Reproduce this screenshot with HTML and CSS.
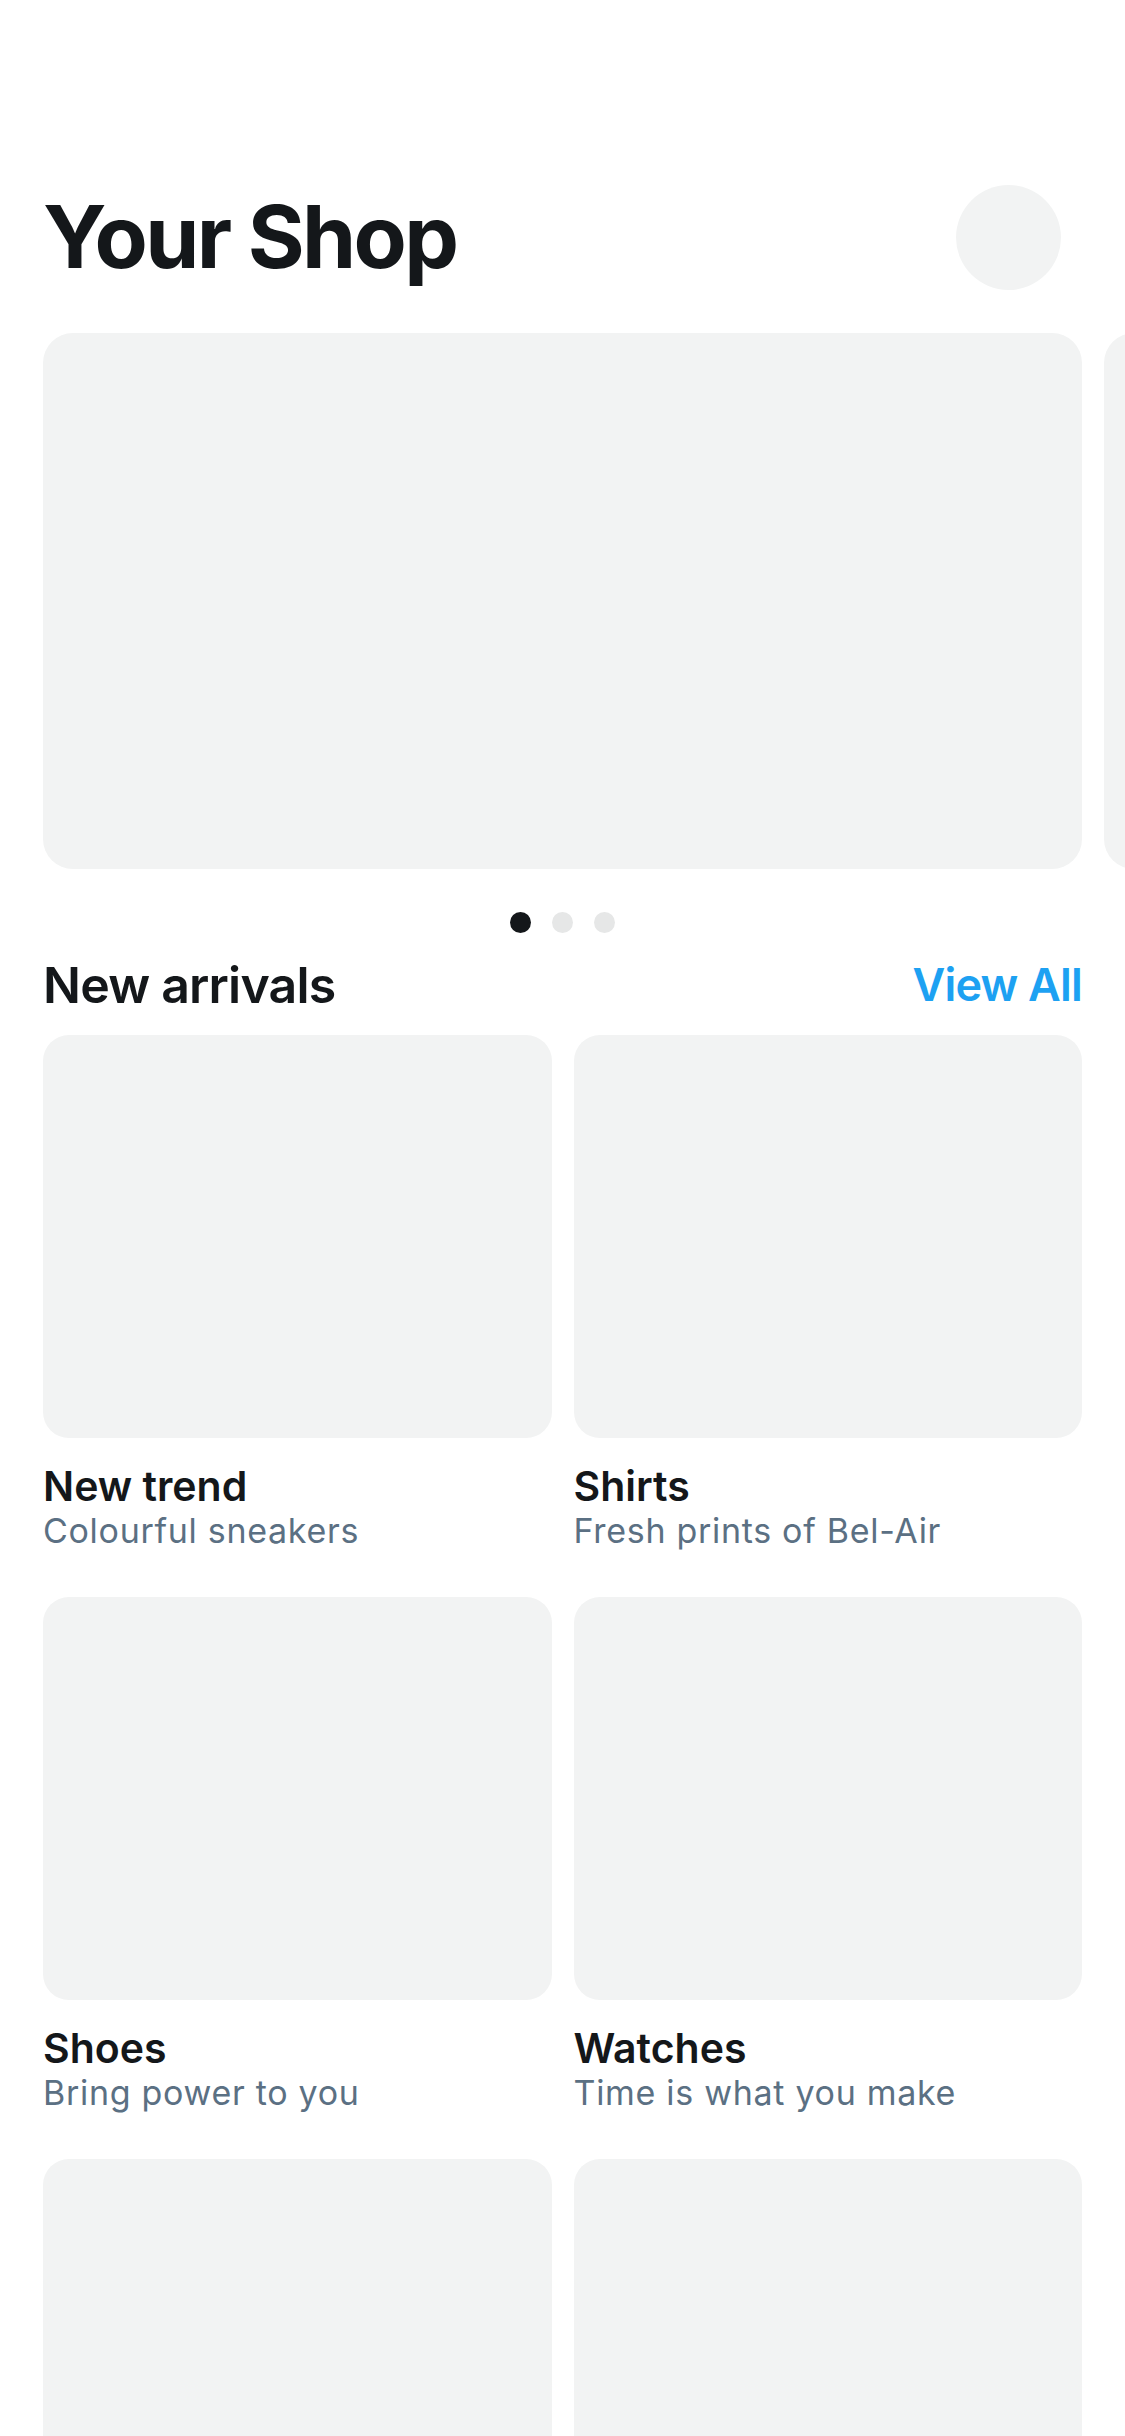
FILE: index.html
```html
<!DOCTYPE html>
<html lang="en">
<head>
<meta charset="utf-8">
<title>Your Shop</title>
<link rel="stylesheet" href="styles.css">
</head>
<body>
<main class="page">
  <header class="header">
    <h1 class="title">Your Shop</h1>
    <div class="avatar"></div>
  </header>

  <section class="carousel">
    <div class="banner-track">
      <div class="banner"></div>
      <div class="banner"></div>
    </div>
    <div class="dots">
      <span class="dot active"></span>
      <span class="dot"></span>
      <span class="dot"></span>
    </div>
  </section>

  <section class="arrivals">
    <div class="section-head">
      <h2 class="section-title">New arrivals</h2>
      <a class="view-all">View All</a>
    </div>
    <div class="grid">
      <div class="card">
        <div class="thumb"></div>
        <div class="card-title">New trend</div>
        <div class="card-sub">Colourful sneakers</div>
      </div>
      <div class="card">
        <div class="thumb"></div>
        <div class="card-title">Shirts</div>
        <div class="card-sub">Fresh prints of Bel-Air</div>
      </div>
      <div class="card">
        <div class="thumb"></div>
        <div class="card-title">Shoes</div>
        <div class="card-sub">Bring power to you</div>
      </div>
      <div class="card">
        <div class="thumb"></div>
        <div class="card-title">Watches</div>
        <div class="card-sub">Time is what you make</div>
      </div>
      <div class="card">
        <div class="thumb"></div>
      </div>
      <div class="card">
        <div class="thumb"></div>
      </div>
    </div>
  </section>
</main>
</body>
</html>
```

FILE: styles.css
```css
* { box-sizing: border-box; }

html, body {
  margin: 0;
  padding: 0;
  background: #ffffff;
}

body {
  font-family: Inter, "Noto Sans", "Liberation Sans", sans-serif;
  color: #14171A;
  width: 1125px;
  height: 2436px;
  overflow: hidden;
}

.page {
  padding: 184px 43px 0 43px;
}

.header {
  display: flex;
  align-items: center;
  justify-content: space-between;
  height: 106px;
}

.title {
  margin: 0;
  font-size: 87px;
  line-height: 106px;
  font-weight: 700;
  letter-spacing: -2.6px;
}

.avatar {
  width: 105px;
  height: 105px;
  border-radius: 50%;
  background: #F2F3F3;
  margin-right: 21px;
}

.carousel {
  margin-top: 43px;
}

.banner-track {
  display: flex;
  gap: 22px;
  margin-right: -43px;
  overflow: hidden;
}

.banner {
  flex: 0 0 1039px;
  height: 536px;
  border-radius: 30px;
  background: #F2F3F3;
}

.dots {
  display: flex;
  justify-content: center;
  gap: 21px;
  margin-top: 43px;
  height: 21px;
}

.dot {
  width: 21px;
  height: 21px;
  border-radius: 50%;
  background: #E6E7E7;
}

.dot.active {
  background: #14171A;
}

.arrivals {
  margin-top: 22px;
}

.section-head {
  display: flex;
  align-items: center;
  justify-content: space-between;
  height: 60px;
}

.section-title {
  margin: 0;
  font-size: 50px;
  line-height: 60px;
  font-weight: 600;
  letter-spacing: -0.8px;
}

.view-all {
  font-size: 45px;
  line-height: 60px;
  font-weight: 600;
  letter-spacing: -0.8px;
  color: #1DA1F2;
}

.grid {
  margin-top: 20px;
  display: grid;
  grid-template-columns: 1fr 1fr;
  column-gap: 22px;
  row-gap: 46px;
}

.thumb {
  height: 403px;
  border-radius: 26px;
  background: #F2F3F3;
}

.card-title {
  margin-top: 23px;
  font-size: 41px;
  line-height: 50px;
  font-weight: 600;
  color: #14171A;
}

.card-sub {
  font-size: 34px;
  line-height: 40px;
  font-weight: 400;
  letter-spacing: 0.7px;
  color: #5B7083;
}
```
